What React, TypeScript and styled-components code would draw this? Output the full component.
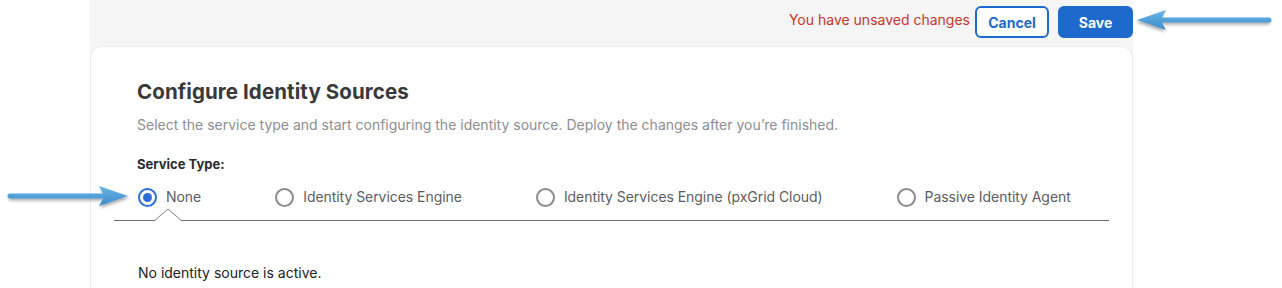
import React from "react";
import styled, { createGlobalStyle } from "styled-components";

const Global = createGlobalStyle`
  html, body { margin: 0; padding: 0; background: #ffffff; }
  body { font-family: Inter, "Noto Sans", Arial, sans-serif; -webkit-font-smoothing: antialiased; }
  * { box-sizing: border-box; }
`;

const Page = styled.div`
  position: relative;
  display: flex;
  width: 1282px;
  height: 288px;
  overflow: hidden;
  padding-left: 90px;
`;

const Main = styled.div`
  width: 1043px;
  background: #f5f5f6;
  display: flex;
  flex-direction: column;
`;

const TopBar = styled.div`
  height: 46px;
  display: flex;
  align-items: flex-start;
  justify-content: flex-end;
  gap: 9px;
  padding-top: 6px;
`;

const Unsaved = styled.span`
  color: #c8362c;
  font-size: 14px;
  line-height: 28px;
  margin-right: -4px;
`;

const Button = styled.button<{ $primary?: boolean }>`
  height: 32px;
  width: ${(p) => (p.$primary ? "75px" : "74px")};
  border-radius: 6px;
  border: 2px solid #1d69cc;
  background: ${(p) => (p.$primary ? "#1d69cc" : "#ffffff")};
  color: ${(p) => (p.$primary ? "#ffffff" : "#1d69cc")};
  font-family: Inter, Arial, sans-serif;
  font-weight: 700;
  font-size: 14px;
  padding: 0;
`;

const Card = styled.div`
  flex: 1;
  background: #ffffff;
  border: 1px solid #ececee;
  border-bottom: none;
  border-radius: 12px 12px 0 0;
  padding: 33px 23px 0 23px;
`;

const Block = styled.div`
  padding-left: 23px;
`;

const Title = styled.h2`
  margin: 0;
  font-size: 20.5px;
  line-height: 24px;
  font-weight: 700;
  color: #39393c;
  letter-spacing: 0.1px;
`;

const Description = styled.p`
  margin: 11px 0 0;
  font-size: 14px;
  line-height: 20px;
  color: #8d8d92;
`;

const Label = styled.div`
  margin-top: 20px;
  font-size: 13px;
  line-height: 18px;
  font-weight: 700;
  color: #2b2b2e;
`;

const TabRow = styled.div`
  position: relative;
  display: flex;
  gap: 74px;
  align-items: center;
  padding: 14px 0 13px 24px;
  border-bottom: 1px solid #6b6b6f;
`;

const RadioItem = styled.label`
  position: relative;
  display: flex;
  align-items: center;
  gap: 9px;
  font-size: 14px;
  line-height: 20px;
  color: #5c5c61;
  letter-spacing: -0.05px;
  white-space: nowrap;
`;

const Circle = styled.span<{ $checked?: boolean }>`
  width: 19px;
  height: 19px;
  border-radius: 50%;
  border: 2px solid ${(p) => (p.$checked ? "#2b6fd6" : "#8a8a8f")};
  display: flex;
  align-items: center;
  justify-content: center;
  &::after {
    content: "";
    width: 9px;
    height: 9px;
    border-radius: 50%;
    background: ${(p) => (p.$checked ? "#2b6fd6" : "transparent")};
  }
`;

const Caret = styled.svg`
  position: absolute;
  left: 16px;
  top: 21px;
`;

const Status = styled.div`
  margin-top: 42px;
  font-size: 14px;
  line-height: 20px;
  color: #222225;
  padding-left: 24px;
`;

const Arrow = styled.svg<{ $left: number; $top: number }>`
  position: absolute;
  left: ${(p) => p.$left}px;
  top: ${(p) => p.$top}px;
  overflow: visible;
`;

const options = [
  "None",
  "Identity Services Engine",
  "Identity Services Engine (pxGrid Cloud)",
  "Passive Identity Agent",
];

function PointerArrow({ dir, left, top, w }: { dir: "left" | "right"; left: number; top: number; w: number }) {
  const transform = dir === "left" ? `scale(-1,1) translate(-${w},0)` : undefined;
  return (
    <Arrow $left={left} $top={top} width={w} height={24} viewBox={`0 0 ${w} 24`}>
      <defs>
        <filter id={`sh-${dir}`} x="-10%" y="-50%" width="120%" height="200%">
          <feDropShadow dx="1" dy="2" stdDeviation="1.5" floodColor="#000" floodOpacity="0.35" />
        </filter>
        <linearGradient id={`gr-${dir}`} x1="0" y1="0" x2="0" y2="1">
          <stop offset="0" stopColor="#6cb4e6" />
          <stop offset="1" stopColor="#3a8ccb" />
        </linearGradient>
      </defs>
      <g transform={transform} filter={`url(#sh-${dir})`}>
        <path
          d={`M3 9.5 H${w - 26} L${w - 30} 2 L${w - 1} 12 L${w - 30} 22 L${w - 26} 14.5 H3 A2.5 2.5 0 0 1 3 9.5 Z`}
          fill={`url(#gr-${dir})`}
        />
      </g>
    </Arrow>
  );
}

export default function App() {
  return (
    <>
      <Global />
      <Page>
        <Main>
          <TopBar>
            <Unsaved>You have unsaved changes</Unsaved>
            <Button>Cancel</Button>
            <Button $primary>Save</Button>
          </TopBar>
          <Card>
            <Block>
              <Title>Configure Identity Sources</Title>
              <Description>
                Select the service type and start configuring the identity source. Deploy the changes after you’re finished.
              </Description>
              <Label>Service Type:</Label>
            </Block>
            <TabRow>
              {options.map((o, i) => (
                <RadioItem key={o}>
                  <Circle $checked={i === 0} />
                  {o}
                  {i === 0 && (
                    <Caret width="30" height="14" viewBox="0 0 30 14">
                      <path d="M0 13 L14 1 L28 13" fill="#ffffff" stroke="#7a7a7e" strokeWidth="1" />
                    </Caret>
                  )}
                </RadioItem>
              ))}
            </TabRow>
            <Status>No identity source is active.</Status>
          </Card>
        </Main>
        <PointerArrow dir="left" left={1136} top={8} w={136} />
        <PointerArrow dir="right" left={7} top={184} w={122} />
      </Page>
    </>
  );
}
